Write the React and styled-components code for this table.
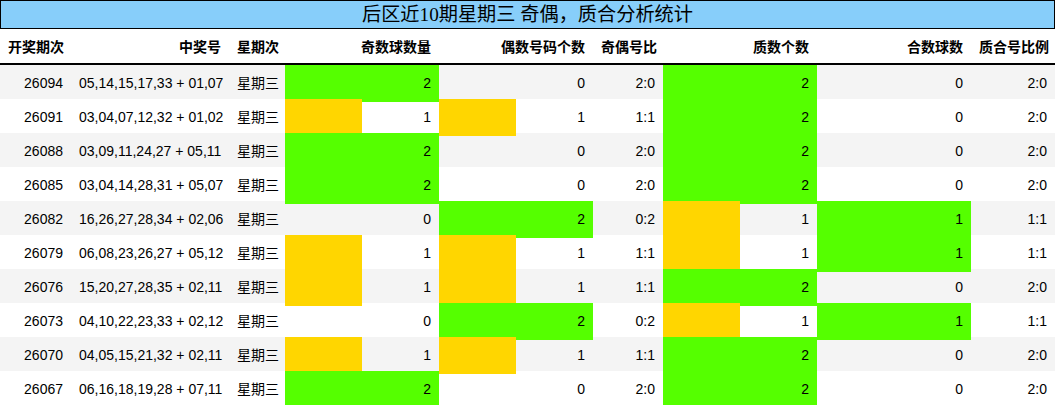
import React from 'react';
import styled, { createGlobalStyle } from 'styled-components';

const GlobalStyle = createGlobalStyle`
  body {
    margin: 0;
    background: #fff;
    font-family: 'Liberation Sans', 'Noto Sans CJK SC', sans-serif;
    color: #000;
  }
`;

const COLS = '71px 158px 56px 154px 154px 70px 154px 154px 1fr';

const GREEN = '#55ff00';
const YELLOW = '#ffd600';

const Table = styled.div`
  width: 1055px;
`;

const Title = styled.div`
  height: 27px;
  line-height: 27px;
  border: 1px solid #000;
  background: #87cefa;
  text-align: center;
  font-family: 'Liberation Serif', 'Noto Sans CJK SC', serif;
  font-size: 19.2px;
  color: #000;
`;

const HeadRow = styled.div`
  display: grid;
  grid-template-columns: ${COLS};
  height: 34px;
  border-bottom: 2px solid #000;
`;

const HeadCell = styled.div`
  padding: 0 8px;
  line-height: 36px;
  text-align: right;
  font-weight: bold;
  font-size: 14px;
  white-space: nowrap;
`;

const Row = styled.div`
  display: grid;
  grid-template-columns: ${COLS};
  height: 34px;
  background: ${(p) => (p.$alt ? '#f4f4f4' : '#fff')};
`;

const Cell = styled.div`
  padding: 0 8px;
  line-height: 37px;
  text-align: right;
  font-size: 14px;
  white-space: nowrap;
`;

const BarCell = styled(Cell)`
  background: ${(p) =>
    p.$pct > 0
      ? `linear-gradient(to right, ${p.$color} 0, ${p.$color} ${p.$pct}%, transparent ${p.$pct}%)`
      : 'transparent'};
`;

const headers = [
  '开奖期次',
  '中奖号',
  '星期次',
  '奇数球数量',
  '偶数号码个数',
  '奇偶号比',
  '质数个数',
  '合数球数',
  '质合号比例',
];

const rows = [
  ['26094', '05,14,15,17,33 + 01,07', 2, 0, '2:0', 2, 0, '2:0'],
  ['26091', '03,04,07,12,32 + 01,02', 1, 1, '1:1', 2, 0, '2:0'],
  ['26088', '03,09,11,24,27 + 05,11', 2, 0, '2:0', 2, 0, '2:0'],
  ['26085', '03,04,14,28,31 + 05,07', 2, 0, '2:0', 2, 0, '2:0'],
  ['26082', '16,26,27,28,34 + 02,06', 0, 2, '0:2', 1, 1, '1:1'],
  ['26079', '06,08,23,26,27 + 05,12', 1, 1, '1:1', 1, 1, '1:1'],
  ['26076', '15,20,27,28,35 + 02,11', 1, 1, '1:1', 2, 0, '2:0'],
  ['26073', '04,10,22,23,33 + 02,12', 0, 2, '0:2', 1, 1, '1:1'],
  ['26070', '04,05,15,21,32 + 02,11', 1, 1, '1:1', 2, 0, '2:0'],
  ['26067', '06,16,18,19,28 + 07,11', 2, 0, '2:0', 2, 0, '2:0'],
];

// bar columns -> index in row data
const barCols = [2, 3, 5, 6];
const maxOf = {};
barCols.forEach((i) => {
  maxOf[i] = Math.max(...rows.map((r) => r[i]));
});

const Bar = ({ value, max }) => {
  const pct = max ? (value / max) * 100 : 0;
  const color = value === max ? GREEN : YELLOW;
  return (
    <BarCell $pct={pct} $color={color}>
      {value}
    </BarCell>
  );
};

const App = () => (
  <>
    <GlobalStyle />
    <Table>
      <Title>后区近10期星期三 奇偶，质合分析统计</Title>
      <HeadRow>
        {headers.map((h) => (
          <HeadCell key={h}>{h}</HeadCell>
        ))}
      </HeadRow>
      {rows.map((r, idx) => (
        <Row key={r[0]} $alt={idx % 2 === 0}>
          <Cell>{r[0]}</Cell>
          <Cell>{r[1]}</Cell>
          <Cell>星期三</Cell>
          <Bar value={r[2]} max={maxOf[2]} />
          <Bar value={r[3]} max={maxOf[3]} />
          <Cell>{r[4]}</Cell>
          <Bar value={r[5]} max={maxOf[5]} />
          <Bar value={r[6]} max={maxOf[6]} />
          <Cell>{r[7]}</Cell>
        </Row>
      ))}
    </Table>
  </>
);

export default App;
